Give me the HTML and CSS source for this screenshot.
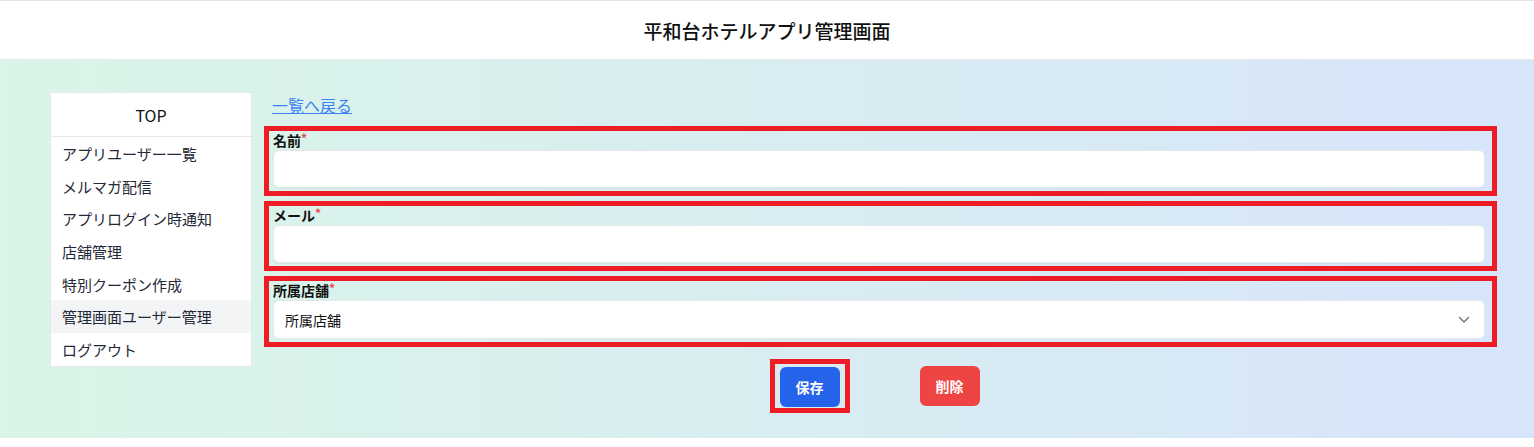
FILE: index.html
```html
<!DOCTYPE html>
<html lang="ja">
<head>
<meta charset="utf-8">
<title>平和台ホテルアプリ管理画面</title>
<link rel="stylesheet" href="styles.css">
</head>
<body>
<header class="topbar">
  <h1 class="title">平和台ホテルアプリ管理画面</h1>
</header>
<main class="layout">
  <nav class="sidebar">
    <div class="side-top">TOP</div>
    <ul class="side-menu">
      <li class="side-item">アプリユーザー一覧</li>
      <li class="side-item">メルマガ配信</li>
      <li class="side-item">アプリログイン時通知</li>
      <li class="side-item">店舗管理</li>
      <li class="side-item">特別クーポン作成</li>
      <li class="side-item active">管理画面ユーザー管理</li>
      <li class="side-item">ログアウト</li>
    </ul>
  </nav>
  <section class="content">
    <a class="back" href="#">一覧へ戻る</a>
    <div class="fields">
      <div class="field">
        <label class="label">名前<span class="req">*</span></label>
        <input class="input" type="text">
      </div>
      <div class="field">
        <label class="label">メール<span class="req">*</span></label>
        <input class="input" type="text">
      </div>
      <div class="field">
        <label class="label">所属店舗<span class="req">*</span></label>
        <div class="select">
          <span class="select-text">所属店舗</span>
          <svg class="chev" width="12" height="8" viewBox="0 0 12 8"><path d="M1.5 1.5 L6 6 L10.5 1.5" fill="none" stroke="#6b7280" stroke-width="1.4" stroke-linecap="round" stroke-linejoin="round"/></svg>
        </div>
      </div>
    </div>
    <div class="actions">
      <div class="mark"><button class="btn save">保存</button></div>
      <button class="btn del">削除</button>
    </div>
  </section>
</main>
</body>
</html>
```

FILE: styles.css
```css
* { box-sizing: border-box; }
html, body { margin: 0; padding: 0; background: #fff; }
body {
  font-family: "Noto Sans CJK JP", "Noto Sans", sans-serif;
  color: #111827;
}
.topbar {
  height: 60px;
  border-top: 1px solid #e3e3e3;
  border-bottom: 1px solid #e5e7eb;
  background: #fff;
  display: flex;
  align-items: center;
  justify-content: center;
}
.title {
  margin: 0;
  font-size: 19px;
  font-weight: 500;
  color: #111;
  line-height: 1;
}
.layout {
  height: 378px;
  background: linear-gradient(to right, #daf5e7, #d7e5fb);
  display: flex;
  align-items: flex-start;
  gap: 12px;
  padding: 32px 37px 0 50px;
}
.sidebar {
  width: 202px;
  flex: none;
  background: #fff;
  border: 1px solid #e5e7eb;
}
.side-top {
  height: 44px;
  border-bottom: 1px solid #e5e7eb;
  display: flex;
  align-items: center;
  justify-content: center;
  font-size: 16px;
  color: #111;
}
.side-menu { list-style: none; margin: 0; padding: 0; }
.side-item {
  height: 32.7px;
  display: flex;
  align-items: center;
  padding-left: 11px;
  font-size: 15px;
  color: #1f2937;
}
.side-item.active { background: #f3f4f6; }
.content {
  flex: 1;
  display: flex;
  flex-direction: column;
  padding-top: 1px;
}
.back {
  align-self: flex-start;
  margin-left: 8px;
  font-size: 16px;
  line-height: 24px;
  color: #3b82f6;
  text-decoration: underline;
  margin-bottom: 9px;
}
.fields { display: flex; flex-direction: column; gap: 5px; }
.field {
  border: 5px solid #ee1c25;
  padding: 0 7px 3px 4px;
  display: flex;
  flex-direction: column;
}
.label {
  font-size: 14px;
  font-weight: 700;
  line-height: 19px;
  color: #111;
}
.req { color: #ef4444; font-size: 12px; vertical-align: top; line-height: 14px; }
.input {
  height: 38px;
  border: 1px solid #e5e7eb;
  border-radius: 6px;
  background: #fff;
  box-shadow: 0 1px 1px rgba(0,0,0,0.04);
  font: inherit;
}
.select {
  height: 39px;
  border: 1px solid #e5e7eb;
  border-radius: 6px;
  background: #fff;
  display: flex;
  align-items: center;
  justify-content: space-between;
  padding: 0 14px 0 11px;
}
.select-text { font-size: 14px; color: #111; }
.actions {
  display: flex;
  align-items: center;
  justify-content: center;
  gap: 70px;
  margin-top: 12px;
  padding-right: 12px;
}
.mark {
  border: 5px solid #ee1c25;
  padding: 3px 5px 1px 5px;
  display: flex;
}
.btn {
  width: 60px;
  height: 40px;
  border: none;
  border-radius: 6px;
  color: #fff;
  font-family: "Noto Sans CJK JP", sans-serif;
  font-size: 14px;
  font-weight: 700;
  padding: 0;
}
.save { background: #2563eb; }
.del { background: #ef4444; }
```
